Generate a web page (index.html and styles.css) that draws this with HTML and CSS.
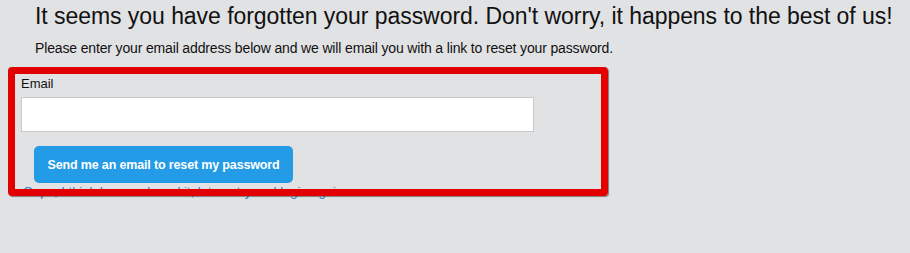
FILE: index.html
```html
<!DOCTYPE html>
<html>
<head>
<meta charset="utf-8">
<link rel="stylesheet" href="styles.css">
</head>
<body>
<div class="page">
  <div class="intro">
    <h1 class="title">It seems you have forgotten your password. Don't worry, it happens to the best of us!</h1>
    <p class="lead">Please enter your email address below and we will email you with a link to reset your password.</p>
  </div>
  <form class="form">
    <label class="label" for="email">Email</label>
    <input class="input" id="email" type="email">
    <div class="actions">
      <button class="btn" type="button">Send me an email to reset my password</button>
    </div>
    <a class="link" href="#">Oops, I think I remembered it, let me try and login again.</a>
  </form>
  <div class="highlight"></div>
</div>
</body>
</html>
```
FILE: styles.css
```css
html, body {
  margin: 0;
  padding: 0;
  background: #e1e2e4;
}
.page {
  position: relative;
  width: 910px;
  height: 253px;
  font-family: "Liberation Sans", Arial, sans-serif;
  color: #111;
}
.intro {
  padding: 2px 0 0 35px;
}
.title {
  margin: 0;
  font-size: 23px;
  font-weight: normal;
  line-height: 28px;
  letter-spacing: -0.05px;
  white-space: nowrap;
}
.lead {
  margin: 10px 0 0;
  font-size: 14px;
  line-height: 16px;
  letter-spacing: -0.15px;
  white-space: nowrap;
}
.form {
  display: flex;
  flex-direction: column;
  align-items: flex-start;
  padding: 20px 0 0 21px;
}
.label {
  font-size: 13px;
  line-height: 16px;
}
.input {
  box-sizing: border-box;
  width: 513px;
  height: 35px;
  margin: 5px 0 0;
  border: 1px solid #c9c9c9;
  background: #fff;
}
.actions {
  padding: 14px 0 0 13px;
}
.btn {
  box-sizing: border-box;
  width: 259px;
  height: 37px;
  border: 0;
  border-radius: 5px;
  background: #239be7;
  color: #fff;
  font-family: "Liberation Sans", Arial, sans-serif;
  font-size: 12.5px;
  letter-spacing: -0.15px;
  font-weight: bold;
  padding: 0;
}
.link {
  margin: 1px 0 0 2px;
  font-size: 13px;
  line-height: 16px;
  color: #2a7fc8;
  text-decoration: none;
}
.highlight {
  position: absolute;
  left: 8px;
  top: 67px;
  width: 600px;
  height: 129px;
  box-sizing: border-box;
  border: 7px solid #e30000;
  border-radius: 4px;
  box-shadow: 1px 1px 1px rgba(0,0,0,0.45);
}
```
